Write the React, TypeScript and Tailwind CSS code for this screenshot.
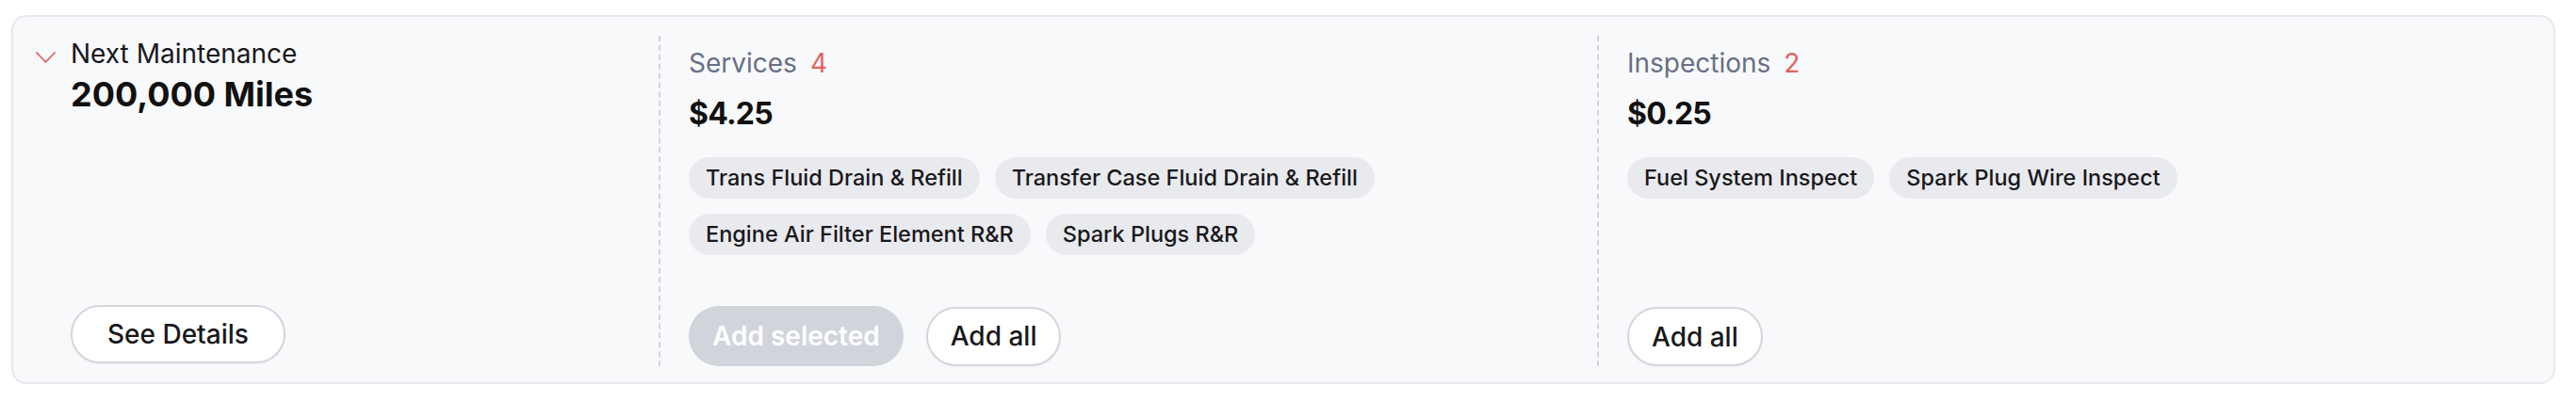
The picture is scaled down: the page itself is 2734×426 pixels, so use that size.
import React from 'react';

const services = [
  'Trans Fluid Drain & Refill',
  'Transfer Case Fluid Drain & Refill',
  'Engine Air Filter Element R&R',
  'Spark Plugs R&R',
];

const inspections = ['Fuel System Inspect', 'Spark Plug Wire Inspect'];

function Chip({ label }: { label: string }) {
  return (
    <span className="flex h-[44px] items-center rounded-full bg-[#e9eaee] px-[18px] text-[23.5px] font-medium leading-none text-[#18181b]">
      {label}
    </span>
  );
}

function OutlineButton({ label }: { label: string }) {
  return (
    <button className="flex h-[63px] items-center rounded-full border-2 border-[#d4d6dc] bg-white px-[24px] text-[28px] font-medium text-[#18181b] shadow-[0_1px_2px_rgba(0,0,0,0.04)]">
      {label}
    </button>
  );
}

interface SectionProps {
  title: string;
  count: number;
  price: string;
  items: string[];
  showAddSelected?: boolean;
  className?: string;
}

function Section({ title, count, price, items, showAddSelected, className = '' }: SectionProps) {
  return (
    <div className={`flex flex-col border-l-2 border-dashed border-[#d1d4da] pl-[30px] pt-[8px] ${className}`}>
      <div className="flex items-center gap-[14px] text-[28px] leading-[42px]">
        <span className="text-[#667085]">{title}</span>
        <span className="text-[#e2625d]">{count}</span>
      </div>
      <div className="mt-[9px] text-[32px] font-bold leading-[48px] tracking-tight text-[#111111]">{price}</div>
      <div className="mt-[22px] flex flex-wrap gap-[16px] pr-[20px]">
        {items.map((it) => (
          <Chip key={it} label={it} />
        ))}
      </div>
      <div className="mt-auto flex items-center gap-[24px]">
        {showAddSelected && (
          <button className="flex h-[64px] items-center rounded-full bg-[#d1d5db] px-[25px] text-[28px] font-semibold text-white">
            Add selected
          </button>
        )}
        <OutlineButton label="Add all" />
      </div>
    </div>
  );
}

export default function App() {
  return (
    <div className="min-h-screen bg-white pl-[12px] pt-[16px] font-['Inter',sans-serif]">
      <div className="flex h-[392px] w-[2700px] rounded-[16px] border-2 border-[#e7e8ec] bg-[#f8f9fb] pb-[17px] pl-[24px] pt-[20px]">
        {/* left column */}
        <div className="flex w-[661px] shrink-0 flex-col">
          <div className="flex items-start gap-[16px]">
            <svg
              className="mt-[17px] shrink-0"
              width="21"
              height="12"
              viewBox="0 0 21 12"
              fill="none"
              stroke="#e2625d"
              strokeWidth="1.8"
              strokeLinecap="round"
              strokeLinejoin="round"
            >
              <polyline points="1,1 10.5,11 20,1" />
            </svg>
            <div>
              <div className="text-[28px] leading-[38px] text-[#18181b]">Next Maintenance</div>
              <div className="text-[36px] font-bold leading-[48px] text-[#111111]">200,000 Miles</div>
            </div>
          </div>
          <div className="mb-[3px] mt-auto pl-[37px]">
            <button className="flex h-[62px] items-center rounded-full border-2 border-[#d4d6dc] bg-white px-[37px] text-[28px] font-medium text-[#18181b] shadow-[0_1px_2px_rgba(0,0,0,0.04)]">
              See Details
            </button>
          </div>
        </div>

        <Section
          title="Services"
          count={4}
          price="$4.25"
          items={services}
          showAddSelected
          className="w-[996px] shrink-0"
        />
        <Section title="Inspections" count={2} price="$0.25" items={inspections} className="flex-1" />
      </div>
    </div>
  );
}
